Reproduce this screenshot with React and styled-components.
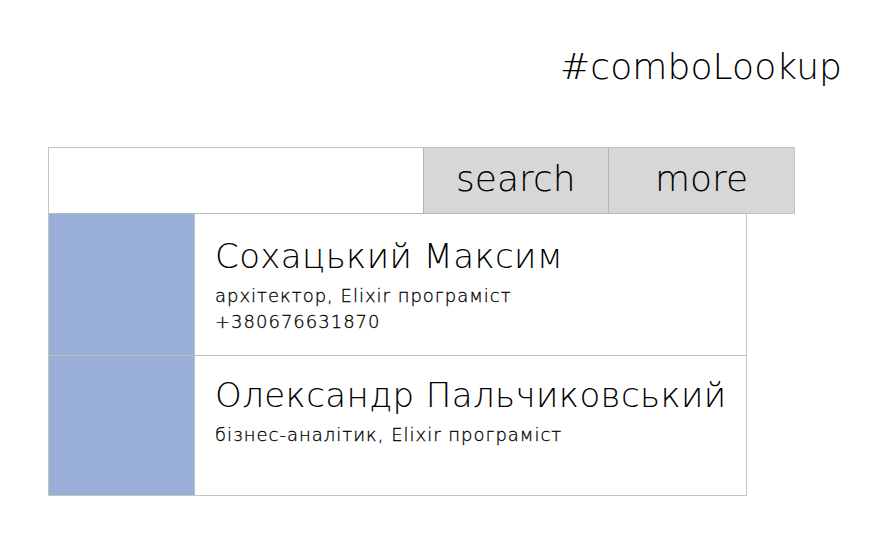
import React from "react";
import styled, { createGlobalStyle } from "styled-components";

const Global = createGlobalStyle`
  html, body { margin: 0; padding: 0; background: #fff; }
  body { font-family: "DejaVu Sans", "Noto Sans", sans-serif; font-weight: 200; color: #000; }
  * { box-sizing: border-box; }
`;

const Page = styled.div`
  width: 896px;
  height: 544px;
  padding: 45px 0 0 48px;
  display: flex;
  flex-direction: column;
`;

const Title = styled.h1`
  margin: 0 54px 0 0;
  align-self: flex-end;
  font-size: 36px;
  line-height: 44px;
  font-weight: 200;
  letter-spacing: 0.1px;
`;

const Combo = styled.div`
  margin-top: 58px;
  display: flex;
  flex-direction: column;
  align-items: flex-start;
`;

const Toolbar = styled.div`
  display: flex;
  height: 67px;
  width: 747px;
  border: 1px solid #c4c4c4;
`;

const Input = styled.input`
  width: 374px;
  height: 100%;
  border: none;
  outline: none;
  padding: 0 12px;
  font: inherit;
  font-size: 24px;
  background: #fff;
`;

const Button = styled.button`
  width: 186px;
  height: 100%;
  margin: 0;
  border: none;
  border-left: 1px solid #b4b4b4;
  background: #d7d7d7;
  font-family: inherit;
  font-weight: 200;
  font-size: 36px;
  color: #000;
  display: flex;
  align-items: center;
  justify-content: center;
  padding: 0 0 4px;
`;

const List = styled.div`
  width: 699px;
  margin-top: -1px;
  border: 1px solid #c4c4c4;
  border-top: 1px solid #b8b8b8;
`;

const Row = styled.div`
  display: flex;
  height: ${(p) => p.$h}px;
  border-top: ${(p) => (p.$first ? "none" : "1px solid #bdbdbd")};
`;

const Avatar = styled.div`
  width: 146px;
  flex: none;
  background: #9aafd8;
  border-right: 1px solid #b6bfd0;
`;

const Info = styled.div`
  padding: ${(p) => p.$pad}px 0 0 20px;
  display: flex;
  flex-direction: column;
`;

const Name = styled.div`
  font-size: 34px;
  line-height: 40px;
  margin-bottom: 7px;
  letter-spacing: 0.4px;
`;

const Detail = styled.div`
  font-size: 18px;
  line-height: 26px;
  letter-spacing: 1px;
  -webkit-text-stroke: 0.3px #000;
`;

const people = [
  { name: "Сохацький Максим", lines: ["архітектор, Elixir програміст", "+380676631870"], h: 141, pad: 22 },
  { name: "Олександр Пальчиковський", lines: ["бізнес-аналітик, Elixir програміст"], h: 140, pad: 19 },
];

export default function App() {
  return (
    <>
      <Global />
      <Page>
        <Title>#comboLookup</Title>
        <Combo>
          <Toolbar>
            <Input aria-label="lookup" />
            <Button>search</Button>
            <Button>more</Button>
          </Toolbar>
          <List>
            {people.map((p, i) => (
              <Row key={p.name} $first={i === 0} $h={p.h}>
                <Avatar />
                <Info $pad={p.pad}>
                  <Name>{p.name}</Name>
                  {p.lines.map((l) => (
                    <Detail key={l}>{l}</Detail>
                  ))}
                </Info>
              </Row>
            ))}
          </List>
        </Combo>
      </Page>
    </>
  );
}
